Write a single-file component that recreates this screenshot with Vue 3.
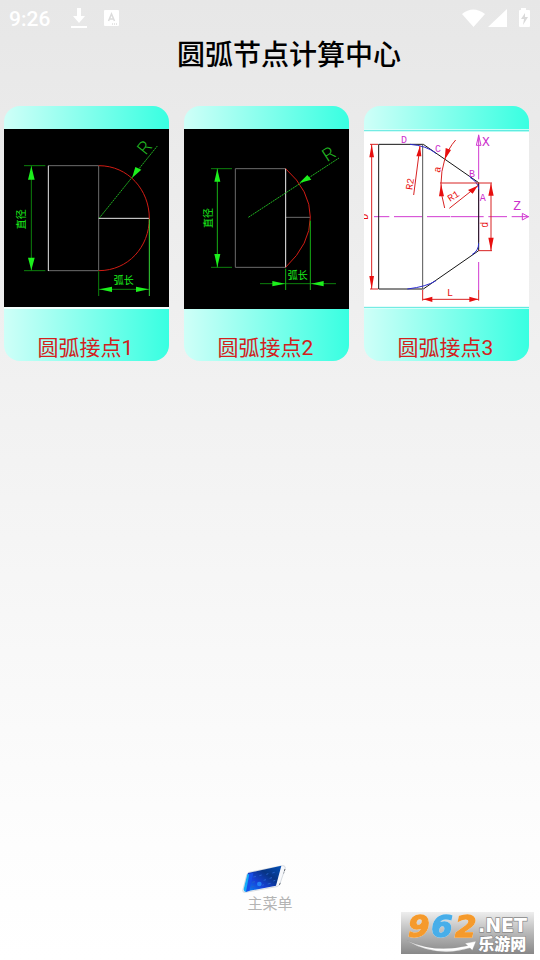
<script setup>
import { ref } from 'vue'

const cards = [
  { id: 1, title: '圆弧接点1' },
  { id: 2, title: '圆弧接点2' },
  { id: 3, title: '圆弧接点3' },
]

const selected = ref(null)

function openCard(id) {
  selected.value = id
}

function backToMenu() {
  selected.value = null
}
</script>

<template>
  <div class="page">
    <div class="status-bar">
      <div class="status-left">
        <span class="clock">9:26</span>
        <svg class="icon-download" viewBox="0 0 16 20">
          <path d="M6 0h4v8h4l-6 7-6-7h4zM0 18h16v2H0z" fill="#fff" />
        </svg>
        <svg class="icon-app" viewBox="0 0 15 16">
          <rect width="15" height="16" rx="1" fill="#fff" />
          <path d="M4.500 11L7.500 4l3 7M5.500 9h4" fill="none" stroke="#dcdcdc" stroke-width="1.500" />
          <path d="M8 14h1M10 14h1M12 14h1" stroke="#ccc" />
        </svg>
      </div>
      <svg class="icon-status" viewBox="0 0 68 20">
        <path d="M0 6Q11-3 23 6L11.500 19z" fill="#fff" />
        <path d="M45 1v18H26z" fill="#fff" />
        <path d="M59 0h5v2h3q1 0 1 1v15q0 1-1 1h-9q-1 0-1-1V3q0-1 1-1h1z" fill="#fff" />
        <path d="M63 5l-4 6h3l-1 6 5-8h-3z" fill="#dadada" />
      </svg>
    </div>

    <h1 class="title">圆弧节点计算中心</h1>

    <main class="card-list">
      <button
        v-for="card in cards"
        :key="card.id"
        type="button"
        class="card"
        :aria-pressed="selected === card.id"
        @click="openCard(card.id)"
      >
        <!-- half circle end -->
        <svg v-if="card.id === 1" class="drawing" viewBox="12 87 495 540">
          <rect x="12" y="87" width="495" height="534" fill="#000" />
          <rect x="12" y="621" width="495" height="6" fill="#f4fffd" />
          <g fill="none" stroke-width="3">
            <path d="M145 197H296M145 512H296M296 197V512" stroke="#6c6c6c" />
            <path d="M145 197V513M296 355H448" stroke="#e8e8e8" />
            <path d="M296 197C385 197 448 270 448 355S385 512 296 512" stroke="#d01c14" />
            <path d="M72 197H136M72 512H136M94 197V512M296 514V588M296 568H448" stroke="#0d800d" />
            <path d="M448 358V588" stroke="#35d535" />
            <path d="M298 354L472 138" stroke="#20b020" stroke-dasharray="6 2" />
          </g>
          <g fill="#1cf01c">
            <path d="M94 198l10 41H84zM94 511l10-38H84zM298 568l38-8v16zM446 568l-38-8v16zM396 234l10-33 18 8z" />
            <text class="cad" transform="translate(76 388) rotate(-90)">直径</text>
            <text class="cad" x="341" y="552">弧长</text>
            <text class="radius" transform="translate(437 167) rotate(-51)">R</text>
          </g>
        </svg>

        <!-- shallow arc end -->
        <svg v-else-if="card.id === 2" class="drawing" viewBox="12 87 495 540">
          <rect x="12" y="87" width="495" height="540" fill="#000" />
          <g fill="none" stroke-width="3">
            <path d="M317 206H166V502H317M317 352H391" stroke="#6c6c6c" />
            <path d="M317 206V502" stroke="#f0f0f0" />
            <path d="M317 206Q391 272 391 352T317 502" stroke="#d01c14" />
            <path d="M93 206H156M93 502H156M240 551H468" stroke="#0d800d" />
            <path d="M112 206V502M317 506V570M391 362V570" stroke="#16b016" />
            <path d="M205 352L477 174" stroke="#20b020" stroke-dasharray="6 2" />
          </g>
          <g fill="#1cf01c">
            <path d="M112 207l9 38h-18zM112 501l9-39h-18zM315 551l-38-8v16zM393 551l38-8v16zM358 249l24-24 12 14z" />
            <text class="cad" transform="translate(96 384) rotate(-90)">直径</text>
            <text class="cad" x="323" y="537">弧长</text>
            <text class="radius" transform="translate(442 187) rotate(-33)">R</text>
          </g>
        </svg>

        <!-- cone with rounded corners -->
        <svg v-else class="drawing" viewBox="12 87 495 540">
          <rect x="12" y="94" width="495" height="527" fill="#fff" />
          <path d="M12 92H507M12 622H507" stroke="#65e8e0" stroke-width="3" />
          <path d="M12 88H507M12 626H507" stroke="#dcfffb" stroke-width="3" />
          <g fill="none" stroke-width="3">
            <path d="M42 350H88M102 350H187M201 350H271M273 350H371M385 350H441M455 350H507M356 104V238M356 250V426M356 486V570" stroke="#d13bd1" />
            <path d="M487 340L505 350L487 360ZM356 106l-7 30h14z" stroke="#d13bd1" />
            <path d="M56 133H190L356 248V452L190 567H56Z" stroke="#151515" />
            <path d="M188 133V567" stroke="#555" />
            <path d="M150 133Q200 137 228 160M330 232Q356 248 356 268M142 567Q200 560 228 542M336 464Q356 452 356 430" stroke="#2c2cd0" />
            <path d="M30 133H54M30 567H54M35 133V567M188 570V602M356 570V602M188 598H356M240 249H396M356 452H396M393 250V452M161 285L180 138M268 325L354 257M254 324Q232 250 254 179Q264 146 287 120" stroke="#d82222" />
          </g>
          <g fill="#e80f0f">
            <path d="M35 133l7 39H28zM35 567l7-39H28zM190 598l27-8v16zM355 598l-27-8v16zM393 250l8 37h-16zM393 452l8-39h-16zM180 137l4 32h-15zM353 257l-15 24-14-11zM254 179l3-35 16 6zM243 251l-6 38h15z" />
            <text class="mono" transform="translate(25 359) rotate(-90)">D</text>
            <text class="mono" transform="translate(157 271) rotate(-82)">R2</text>
            <text class="mono" transform="translate(270 306) rotate(-32)">R1</text>
            <text class="mono" transform="translate(240 219) rotate(-80)">a</text>
            <text class="mono" transform="translate(385 383) rotate(-90)">d</text>
            <text class="mono" x="261" y="587">L</text>
          </g>
          <g fill="#cc2fcc">
            <text class="mono" x="123" y="128">D</text>
            <text class="mono" x="225" y="157">C</text>
            <text class="mono" x="327" y="232">B</text>
            <text class="mono" x="359" y="303">A</text>
            <text class="mono axis" x="366" y="137">X</text>
            <text class="mono axis" x="460" y="331">Z</text>
          </g>
        </svg>

        <span class="card-title">{{ card.title }}</span>
      </button>
    </main>

    <footer class="footer">
      <button type="button" class="menu-button" @click="backToMenu">
        <svg class="phone" viewBox="0 0 132 84">
          <defs>
            <linearGradient id="screen" x1="0" y1="1" x2="1" y2="0">
              <stop offset="0" stop-color="#078ff5" />
              <stop offset="0.350" stop-color="#1740d8" />
              <stop offset="0.650" stop-color="#073484" />
              <stop offset="1" stop-color="#0350b8" />
            </linearGradient>
          </defs>
          <path d="M20 22L122 2Q132 2 129 12L113 59Q110 64 103 65L10 82Q0 83 3 73L14 30Q16 24 20 22z" fill="#f7f8fb" stroke="#c3cad3" stroke-width="2" />
          <path d="M18 24L118 2L102 62L8 80z" fill="url(#screen)" />
          <path d="M16 28L5 72Q4 80 14 80L28 28z" fill="#16aaf5" />
          <path d="M22 26L34 24L22 78L12 80z" fill="#174ee8" />
          <path d="M34 36l8-2M52 32l7-2M73 28l6-2M91 24l7-2M31 52l8-2M65 46l7-2M83 40l7-2M28 66l9-2M60 61l6-2M77 57l9-2M94 48l6-2" stroke="#2560cc" stroke-width="3" />
          <circle cx="52" cy="57" r="7" fill="#2380f5" />
          <path d="M129 12l-4 13M112 60l4-9" stroke="#29313d" stroke-width="2" stroke-dasharray="7 4" />
        </svg>
        <span class="menu-label">主菜单</span>
      </button>
    </footer>

    <a class="site-mark" href="#" aria-label="962.NET 乐游网">
      <svg viewBox="18 36 399 126">
        <defs>
          <linearGradient id="mark" x1="0" y1="0" x2="0" y2="1">
            <stop offset="0" stop-color="#eeeeee" />
            <stop offset="0.500" stop-color="#b8b8b8" />
            <stop offset="1" stop-color="#888888" />
          </linearGradient>
        </defs>
        <rect x="18" y="36" width="399" height="126" fill="url(#mark)" />
        <path d="M36 122Q120 160 218 137L210 130L243 124L232 151L225 144Q125 174 36 122z" fill="#fff" stroke="#999" />
        <g class="digits">
          <text x="39" y="112" fill="#f59a2c" stroke="#f59a2c">9</text>
          <text x="109" y="112" fill="#48aee9" stroke="#48aee9">6</text>
          <text x="180" y="112" fill="#f59a2c" stroke="#f59a2c">2</text>
        </g>
        <text class="net" x="249" y="96">.NET</text>
        <text class="site-name" x="250" y="150">乐游网</text>
      </svg>
    </a>
  </div>
</template>

<style>
body {
  margin: 0;
  background: #fff;
}
</style>

<style scoped>
.page {
  position: relative;
  box-sizing: border-box;
  min-height: 100vh;
  display: flex;
  flex-direction: column;
  background: linear-gradient(#e7e7e7, #fdfdfd 88%, #fff);
  font-family: Roboto, 'Noto Sans CJK SC', sans-serif;
}

button {
  border: none;
  padding: 0;
  background: none;
  font-family: inherit;
  cursor: pointer;
}

.status-bar {
  display: flex;
  align-items: center;
  justify-content: space-between;
  height: 36px;
  padding: 0 10px 0 9px;
}

.status-left {
  display: flex;
  align-items: center;
}

.clock {
  color: #fff;
  font-size: 21px;
  font-weight: 500;
  line-height: 24px;
  padding-top: 2px;
}

.icon-download {
  width: 16px;
  height: 20px;
  margin-left: 21px;
}

.icon-app {
  width: 15px;
  height: 16px;
  margin-left: 17px;
}

.icon-status {
  width: 68px;
  height: 20px;
}

.title {
  margin: 0;
  padding-left: 38px;
  text-align: center;
  color: #000;
  font-size: 28px;
  font-weight: 500;
  line-height: 40px;
}

.card-list {
  display: grid;
  grid-template-columns: repeat(3, 1fr);
  gap: 15px;
  padding: 30px 11px 0 4px;
}

.card {
  display: flex;
  flex-direction: column;
  overflow: hidden;
  padding-top: 23px;
  border-radius: 16px;
  background: linear-gradient(90deg, #cffff8, #38ffe1);
}

.drawing {
  display: block;
  width: 100%;
}

.card-title {
  width: 100%;
  padding: 26px 2px 0 0;
  box-sizing: border-box;
  color: #d3201c;
  font-size: 21px;
  line-height: 26px;
  text-align: center;
}

.cad {
  font-family: 'Noto Sans CJK SC', sans-serif;
  font-size: 30px;
}

.radius {
  font-family: Roboto, sans-serif;
  font-size: 54px;
  font-weight: 300;
  fill: #22b822;
}

.mono {
  font-family: 'Liberation Mono', monospace;
  font-size: 30px;
}

.axis {
  font-size: 39px;
}

.footer {
  display: flex;
  justify-content: center;
  margin-top: auto;
  padding-bottom: 45px;
}

.menu-button {
  display: flex;
  flex-direction: column;
  align-items: center;
}

.phone {
  width: 44px;
  height: 28px;
  margin-right: 12px;
}

.menu-label {
  color: #b4b4b4;
  font-size: 15px;
  line-height: 22px;
}

.site-mark {
  position: absolute;
  right: 6px;
  bottom: 6px;
  width: 133px;
}

.site-mark svg {
  display: block;
  width: 100%;
  overflow: visible;
}

.digits {
  font-family: 'DejaVu Sans', sans-serif;
  font-size: 93px;
  font-weight: bold;
  font-style: italic;
  stroke-width: 4;
  filter: drop-shadow(0 0 1px #fff);
}

.net {
  font-family: 'DejaVu Sans', sans-serif;
  font-size: 57px;
  font-weight: bold;
  fill: #fff;
  stroke: #888;
  stroke-width: 4;
  paint-order: stroke;
}

.site-name {
  font-family: 'Noto Sans CJK SC', sans-serif;
  font-size: 48px;
  font-weight: 900;
  fill: #fff;
  stroke: #888;
  stroke-width: 4;
  paint-order: stroke;
}
</style>
